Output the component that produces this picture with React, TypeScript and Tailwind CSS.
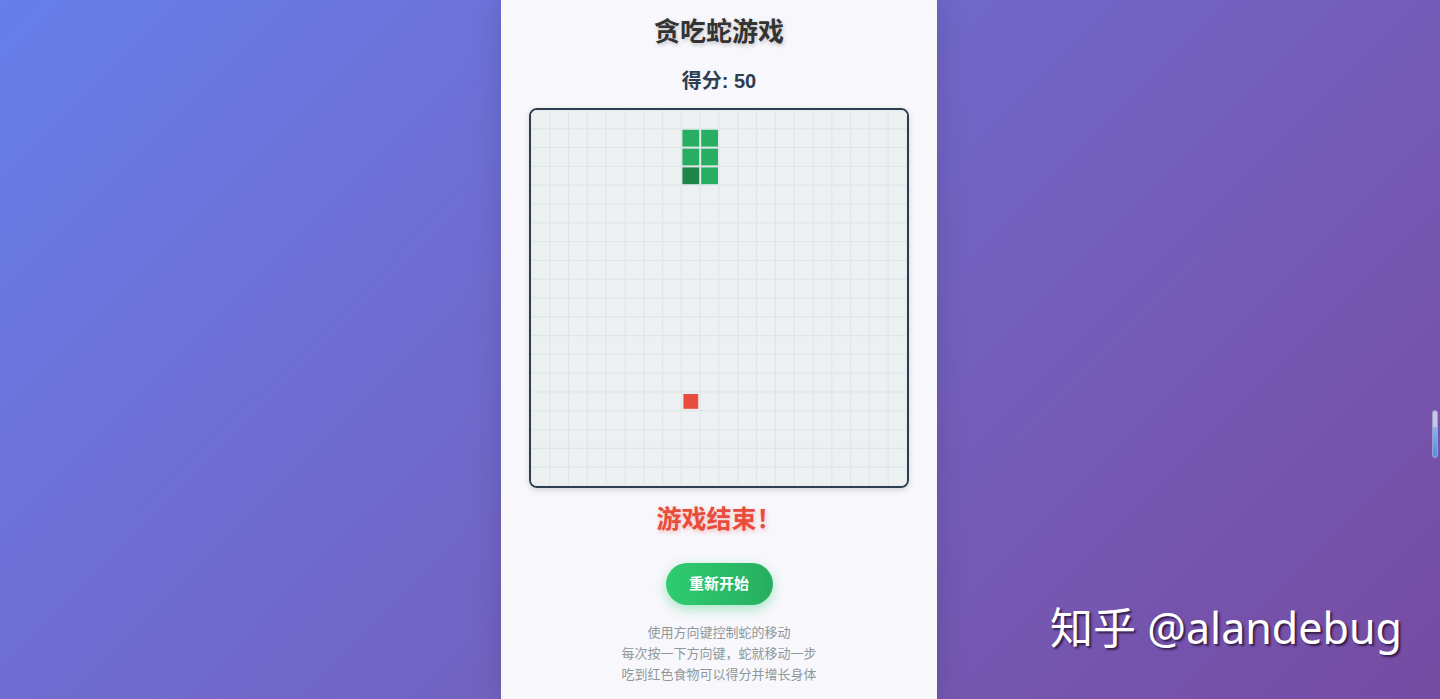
const CELL = 18.8
const GRID = 20
const snake = [
  { x: 8, y: 3, head: true },
  { x: 8, y: 2 },
  { x: 8, y: 1 },
  { x: 9, y: 1 },
  { x: 9, y: 2 },
  { x: 9, y: 3 },
]
const food = { x: 8, y: 15 }

function Board() {
  const size = CELL * GRID
  const lines = Array.from({ length: GRID + 1 }, (_, i) => i * CELL)
  return (
    <svg width={376} height={376} viewBox={`0 0 ${size} ${size}`} className="block">
      <rect width={size} height={size} fill="#ecf0f1" />
      {lines.map((p) => (
        <g key={p} stroke="#dde3e6" strokeWidth={1}>
          <line x1={p} y1={0} x2={p} y2={size} />
          <line x1={0} y1={p} x2={size} y2={p} />
        </g>
      ))}
      {snake.map((s, i) => (
        <rect
          key={i}
          x={s.x * CELL + 1}
          y={s.y * CELL + 1}
          width={CELL - 2}
          height={CELL - 2}
          fill={s.head ? "#1e8449" : "#27ae60"}
        />
      ))}
      <rect x={food.x * CELL + 2} y={food.y * CELL + 2} width={CELL - 4} height={CELL - 4} fill="#e74c3c" />
    </svg>
  )
}

export default function App() {
  return (
    <div
      className="relative h-[699px] overflow-hidden bg-linear-135 from-[#667eea] to-[#764ba2] flex justify-center"
      style={{ fontFamily: '"Liberation Sans", "Noto Sans CJK SC", sans-serif' }}
    >
      <div className="mr-[2px] w-[436px] h-full bg-[#f7f7fc] shadow-[0_0_30px_rgba(0,0,0,0.15)] flex flex-col items-center pt-4">
        <h1 className="text-[26px] leading-8 font-bold text-[#333] [text-shadow:1px_2px_4px_rgba(0,0,0,0.22)]">
          贪吃蛇游戏
        </h1>
        <div className="mt-[19px] text-xl leading-7 font-bold text-[#2c3e50]">得分: 50</div>
        <div className="mt-[13px] border-2 border-[#2c3e50] rounded-lg overflow-hidden shadow-[0_2px_6px_rgba(0,0,0,0.15)]">
          <Board />
        </div>
        <div
          className="mt-[13px] text-[25px] leading-8 font-bold text-[#e74c3c] [text-shadow:1px_2px_4px_rgba(231,76,60,0.35)]"
          style={{ fontFamily: '"Noto Sans CJK SC", sans-serif' }}
        >
          游戏结束！
        </div>
        <button
          type="button"
          className="mt-[30px] w-[107px] h-[42px] rounded-full bg-linear-to-r from-[#2ecc71] to-[#27ae60] text-white text-[15px] font-bold shadow-[0_4px_12px_rgba(46,204,113,0.4)]"
        >
          重新开始
        </button>
        <div className="mt-[17px] text-[13px] leading-[21px] text-[#8f979a] text-center">
          <p>使用方向键控制蛇的移动</p>
          <p>每次按一下方向键，蛇就移动一步</p>
          <p>吃到红色食物可以得分并增长身体</p>
        </div>
      </div>

      <div
        className="absolute right-[38px] top-[600px] text-[43px] leading-[56px] text-white [text-shadow:2px_2px_2px_rgba(40,20,60,0.85)]"
        style={{ fontFamily: '"Noto Sans", "Noto Sans CJK SC", sans-serif' }}
      >
        知乎 @alandebug
      </div>

      <div className="absolute right-[2px] top-[410px] w-[6px] h-[48px] rounded-full border border-[#9aa0c8] bg-[#c9c6e6] overflow-hidden flex flex-col justify-end">
        <div className="h-[30px] bg-linear-to-b from-[#8ab4f0] to-[#4a90e2]" />
      </div>
    </div>
  )
}
